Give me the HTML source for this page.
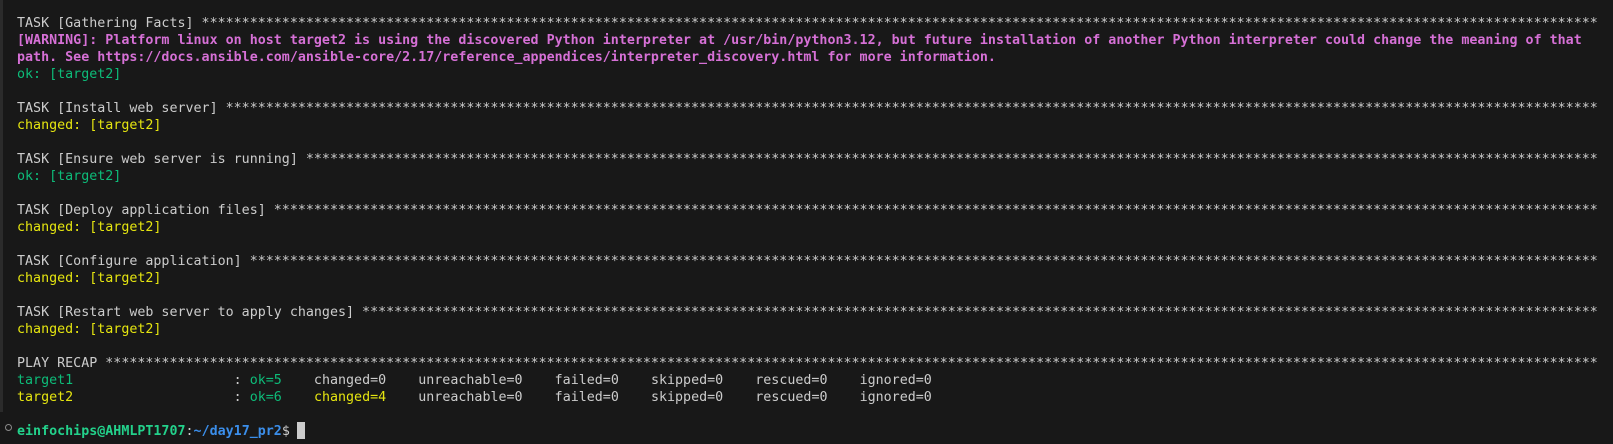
<!DOCTYPE html>
<html><head><meta charset="utf-8"><style>
html,body{margin:0;padding:0;background:#181818;width:1613px;height:444px;overflow:hidden;}
body{position:relative;font-family:"DejaVu Sans Mono","Liberation Mono",monospace;font-size:13.33px;line-height:17px;color:#cccccc;}
#t{position:absolute;left:17px;top:15px;white-space:pre;}
.l{height:17px;}
.s{width:1580px;overflow:hidden;}
.m{color:#d670d6;font-weight:bold;}
.g{color:#0dbc79;}
.y{color:#e5e510;}
.pg{color:#23d18b;font-weight:bold;}
.pb{color:#3b8eea;font-weight:bold;}
#bar{position:absolute;left:0;top:0;width:3px;height:412px;background:#2b2b2b;}
#circ{position:absolute;left:5px;top:424px;width:5px;height:5px;border:1px solid #8a8a8a;border-radius:50%;}
#cur{position:absolute;left:297px;top:422px;width:8px;height:17px;background:#cccccc;}
</style></head><body>
<div id="bar"></div>
<div id="circ"></div>
<div id="t"><div class="l s">TASK [Gathering Facts] ************************************************************************************************************************************************************************************************************************</div><div class="l m">[WARNING]: Platform linux on host target2 is using the discovered Python interpreter at /usr/bin/python3.12, but future installation of another Python interpreter could change the meaning of that</div><div class="l m">path. See https://docs.ansible.com/ansible-core/2.17/reference_appendices/interpreter_discovery.html for more information.</div><div class="l g">ok: [target2]</div><div class="l"> </div><div class="l s">TASK [Install web server] ************************************************************************************************************************************************************************************************************************</div><div class="l y">changed: [target2]</div><div class="l"> </div><div class="l s">TASK [Ensure web server is running] ************************************************************************************************************************************************************************************************************************</div><div class="l g">ok: [target2]</div><div class="l"> </div><div class="l s">TASK [Deploy application files] ************************************************************************************************************************************************************************************************************************</div><div class="l y">changed: [target2]</div><div class="l"> </div><div class="l s">TASK [Configure application] ************************************************************************************************************************************************************************************************************************</div><div class="l y">changed: [target2]</div><div class="l"> </div><div class="l s">TASK [Restart web server to apply changes] ************************************************************************************************************************************************************************************************************************</div><div class="l y">changed: [target2]</div><div class="l"> </div><div class="l s">PLAY RECAP ************************************************************************************************************************************************************************************************************************</div><div class="l"><span class="g">target1</span>                    : <span class="g">ok=5</span>    changed=0    unreachable=0    failed=0    skipped=0    rescued=0    ignored=0</div><div class="l"><span class="y">target2</span>                    : <span class="g">ok=6</span>    <span class="y">changed=4</span>    unreachable=0    failed=0    skipped=0    rescued=0    ignored=0</div><div class="l"> </div><div class="l"><span class="pg">einfochips@AHMLPT1707</span>:<span class="pb">~/day17_pr2</span>$ </div></div>
<div id="cur"></div>
</body></html>
